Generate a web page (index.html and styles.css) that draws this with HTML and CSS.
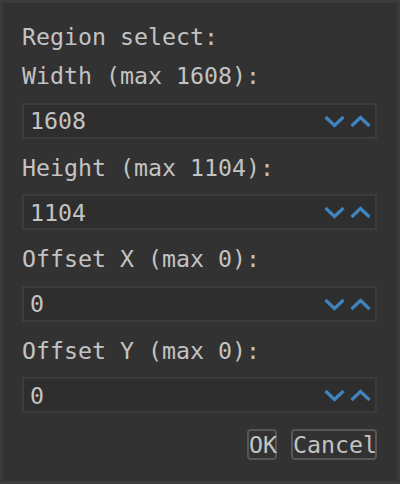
FILE: index.html
```html
<!DOCTYPE html>
<html>
<head>
<meta charset="utf-8">
<link rel="stylesheet" href="styles.css">
</head>
<body>
<div class="dialog">
  <div class="title">Region select:</div>
  <div class="field">
    <div class="label">Width (max 1608):</div>
    <div class="spin"><span class="value">1608</span>
      <svg class="arrows" width="47" height="13" viewBox="0 0 47 13"><path d="M1.5 2 L10.5 10.5 L19.5 2"/><path d="M27.5 11 L36.5 2.5 L45.5 11"/></svg>
    </div>
  </div>
  <div class="field">
    <div class="label">Height (max 1104):</div>
    <div class="spin"><span class="value">1104</span>
      <svg class="arrows" width="47" height="13" viewBox="0 0 47 13"><path d="M1.5 2 L10.5 10.5 L19.5 2"/><path d="M27.5 11 L36.5 2.5 L45.5 11"/></svg>
    </div>
  </div>
  <div class="field">
    <div class="label">Offset X (max 0):</div>
    <div class="spin"><span class="value">0</span>
      <svg class="arrows" width="47" height="13" viewBox="0 0 47 13"><path d="M1.5 2 L10.5 10.5 L19.5 2"/><path d="M27.5 11 L36.5 2.5 L45.5 11"/></svg>
    </div>
  </div>
  <div class="field">
    <div class="label">Offset Y (max 0):</div>
    <div class="spin"><span class="value">0</span>
      <svg class="arrows" width="47" height="13" viewBox="0 0 47 13"><path d="M1.5 2 L10.5 10.5 L19.5 2"/><path d="M27.5 11 L36.5 2.5 L45.5 11"/></svg>
    </div>
  </div>
  <div class="buttons">
    <button class="btn ok">OK</button>
    <button class="btn cancel">Cancel</button>
  </div>
</div>
</body>
</html>
```

FILE: styles.css
```css
html, body {
  margin: 0;
  padding: 0;
  background: #323232;
}
.dialog {
  box-sizing: border-box;
  width: 400px;
  height: 484px;
  border: 3px solid #3b3b3b;
  background: #323232;
  padding: 20px 20px 0 19px;
  font-family: "DejaVu Sans Mono", "Liberation Mono", monospace;
  font-size: 23.25px;
  line-height: 27px;
  color: #c3c3c3;
  display: flex;
  flex-direction: column;
}
.title {
  height: 27px;
  margin-bottom: 12px;
}
.field {
  display: flex;
  flex-direction: column;
  margin-bottom: 15px;
}
.label {
  height: 27px;
}
.spin {
  box-sizing: border-box;
  margin-top: 13.5px;
  height: 36px;
  border: 2px solid #3c3c3c;
  background: #2e2e2e;
  padding: 0 4px 0 4px;
  display: flex;
  align-items: center;
  justify-content: space-between;
}
.value {
  padding-left: 2px;
}
.arrows {
  display: block;
  margin-top: 1px;
}
.arrows path {
  fill: none;
  stroke: #3f84bf;
  stroke-width: 3.2;
  stroke-linejoin: miter;
}
.buttons {
  display: flex;
  justify-content: flex-end;
  gap: 14px;
  margin-top: 1px;
}
.btn {
  box-sizing: border-box;
  height: 31px;
  padding: 0;
  border: 2px solid #575757;
  border-radius: 4px;
  background: #323232;
  color: #c3c3c3;
  font-family: "DejaVu Sans Mono", "Liberation Mono", monospace;
  font-size: 23.25px;
  line-height: 27px;
  text-align: center;
  overflow: visible;
  white-space: nowrap;
}
.ok {
  width: 30px;
}
.cancel {
  width: 86px;
}
```
